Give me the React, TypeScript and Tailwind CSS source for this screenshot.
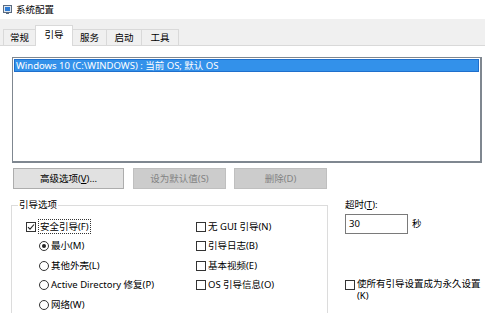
import React from 'react'

const font = { fontFamily: '"Noto Sans", "Noto Sans CJK SC", sans-serif' }

function CheckBox({ checked = false }: { checked?: boolean }) {
  return (
    <span className="w-[10px] h-[10px] border border-[#333] bg-white flex items-center justify-center shrink-0">
      {checked && (
        <svg width="8" height="8" viewBox="0 0 8 8">
          <path d="M1 4.2 L3 6.2 L7 1.5" fill="none" stroke="#222" strokeWidth="1.1" />
        </svg>
      )}
    </span>
  )
}

function Radio({ checked = false }: { checked?: boolean }) {
  return (
    <span className="w-[10px] h-[10px] rounded-full border border-[#333] bg-white flex items-center justify-center shrink-0">
      {checked && <span className="w-[4px] h-[4px] rounded-full bg-[#222]" />}
    </span>
  )
}

export default function App() {
  const tabs = [
    { label: '常规', w: 'w-[33px]' },
    { label: '引导', w: 'w-[38px]', active: true },
    { label: '服务', w: 'w-[35px]' },
    { label: '启动', w: 'w-[36px]' },
    { label: '工具', w: 'w-[38px]' },
  ]

  return (
    <div className="w-[485px] h-[313px] overflow-hidden bg-white text-[9.5px] leading-[12px] text-[#000]" style={font}>
      {/* 标题栏 */}
      <div className="h-[19px] flex items-center pl-[3px] gap-[3px]">
        <svg width="9" height="9" viewBox="0 0 9 9">
          <rect x="0.5" y="0.5" width="8" height="7" fill="#dfe6ee" stroke="#5a6b80" />
          <rect x="2" y="2" width="5" height="4" fill="#2d7bd6" />
          <rect x="3" y="8" width="3" height="1" fill="#5a6b80" />
        </svg>
        <span className="ml-[1px]">系统配置</span>
      </div>

      {/* 选项卡 */}
      <div className="h-[27px] bg-[#f0f0f0] border-b border-[#d9d9d9] flex items-end pl-[3px]">
        {tabs.map((t) =>
          t.active ? (
            <div
              key={t.label}
              className={`${t.w} h-[21px] -mb-px -ml-px bg-white border border-b-0 border-[#d9d9d9] flex items-start justify-center pt-[3px] relative`}
            >
              {t.label}
            </div>
          ) : (
            <div
              key={t.label}
              className={`${t.w} h-[16px] -ml-px first:ml-0 bg-[#f0f0f0] border border-b-0 border-[#d9d9d9] flex items-center justify-center`}
            >
              {t.label}
            </div>
          )
        )}
      </div>

      {/* 引导列表 */}
      <div className="pl-[12px] pt-[11px]">
        <div className="w-[470px] h-[106px] border border-[#7f8790] border-r-2 border-b-2 bg-white p-px">
          <div className="h-[13px] bg-[#3391ea] border border-[#1f6fcc] text-white flex items-center pl-px">
            Windows 10 (C:\WINDOWS) : 当前 OS; 默认 OS
          </div>
        </div>
      </div>

      {/* 按钮 */}
      <div className="flex pl-[13px] pt-[5px]">
        <div className="w-[111px] h-[21px] bg-[#e1e1e1] border border-[#adadad] flex items-center justify-center">
          高级选项(<span className="underline">V</span>)...
        </div>
        <div className="w-[93px] h-[21px] ml-[9px] bg-[#cccccc] border border-[#bfbfbf] text-[#838383] flex items-center justify-center">
          设为默认值(S)
        </div>
        <div className="w-[93px] h-[21px] ml-[8px] bg-[#cccccc] border border-[#bfbfbf] text-[#838383] flex items-center justify-center">
          删除(D)
        </div>
      </div>

      {/* 下部 */}
      <div className="flex items-start">
        <div className="ml-[11px] mt-[16px] w-[317px] h-[120px] border border-[#dcdcdc] relative">
          <span className="absolute -top-[7px] left-[6px] bg-white px-px">引导选项</span>
          <div className="flex pt-[11px]">
            <div className="w-[170px] pl-[14px] flex flex-col">
              <div className="h-[19.5px] flex items-center gap-[2px]">
                <CheckBox checked />
                <span className="border border-dotted border-[#333] px-px leading-[13px]">安全引导(F)</span>
              </div>
              <div className="h-[19.5px] flex items-center gap-[2px] pl-[13px]">
                <Radio checked />
                <span>最小(M)</span>
              </div>
              <div className="h-[19.5px] flex items-center gap-[2px] pl-[13px]">
                <Radio />
                <span>其他外壳(L)</span>
              </div>
              <div className="h-[19.5px] flex items-center gap-[2px] pl-[13px]">
                <Radio />
                <span>Active Directory 修复(P)</span>
              </div>
              <div className="h-[19.5px] flex items-center gap-[2px] pl-[13px]">
                <Radio />
                <span>网络(W)</span>
              </div>
            </div>
            <div className="pl-[14px] flex flex-col">
              <div className="h-[19.5px] flex items-center gap-[2px]">
                <CheckBox />
                <span>无 GUI 引导(N)</span>
              </div>
              <div className="h-[19.5px] flex items-center gap-[2px]">
                <CheckBox />
                <span>引导日志(B)</span>
              </div>
              <div className="h-[19.5px] flex items-center gap-[2px]">
                <CheckBox />
                <span>基本视频(E)</span>
              </div>
              <div className="h-[19.5px] flex items-center gap-[2px]">
                <CheckBox />
                <span>OS 引导信息(O)</span>
              </div>
            </div>
          </div>
        </div>

        <div className="ml-[17px] pt-[10px] flex flex-col">
          <span>超时(<span className="underline">T</span>):</span>
          <div className="flex items-center mt-[3px]">
            <div className="w-[63px] h-[20px] border border-[#7a7a7a] bg-white flex items-center pl-[3px]">30</div>
            <span className="ml-[4px]">秒</span>
          </div>
          <div className="flex items-start gap-[2px] mt-[44px]">
            <span className="mt-[2px]">
              <CheckBox />
            </span>
            <div className="flex flex-col">
              <span>使所有引导设置成为永久设置</span>
              <span>(K)</span>
            </div>
          </div>
        </div>
      </div>
    </div>
  )
}
